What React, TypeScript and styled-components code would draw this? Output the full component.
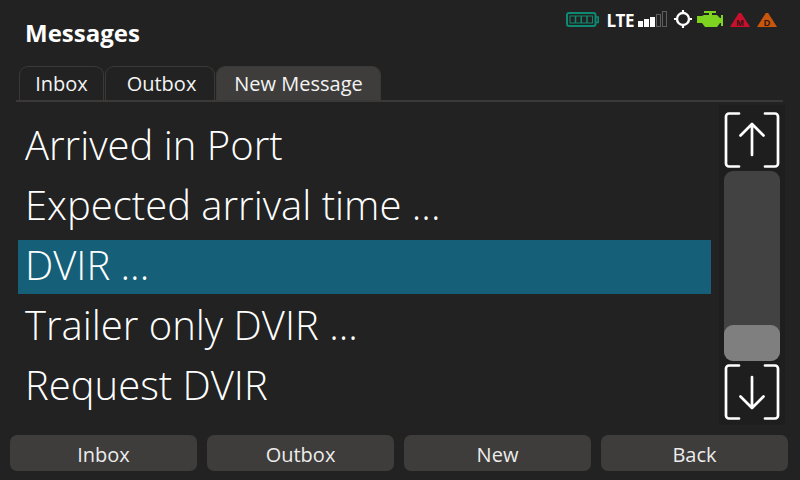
import React from 'react'
import styled, { createGlobalStyle } from 'styled-components'

const GlobalStyle = createGlobalStyle`
  html, body {
    margin: 0;
    padding: 0;
    background: #222222;
  }
  * {
    box-sizing: border-box;
  }
`

const Screen = styled.div`
  width: 800px;
  height: 480px;
  overflow: hidden;
  display: flex;
  flex-direction: column;
  background: #222222;
  color: #fff;
  font-family: 'Open Sans', 'Liberation Sans', sans-serif;
`

const Header = styled.header`
  height: 66px;
  flex: none;
  padding: 0 23px 0 25px;
  display: flex;
  justify-content: space-between;
  align-items: flex-start;
`

const Title = styled.h1`
  margin: 17px 0 0;
  font-size: 24px;
  line-height: 32px;
  font-weight: 700;
`

const StatusIcons = styled.div`
  margin-top: 10px;
  display: flex;
  align-items: flex-start;
`

const TabBar = styled.nav`
  height: 36px;
  flex: none;
  margin: 0 17px 0 16px;
  padding-left: 3px;
  display: flex;
  border-bottom: 2px solid #3a3937;
`

const Tab = styled.div<{ $active?: boolean; $width: number; $indent?: number }>`
  width: ${({ $width }) => $width}px;
  height: 34px;
  padding-left: ${({ $indent }) => $indent ?? 0}px;
  display: flex;
  align-items: center;
  justify-content: center;
  font-size: 20px;
  color: #f4f4f4;
  border-radius: 9px 9px 0 0;
  border: 1px solid #3a3937;
  border-bottom: none;
  background: ${({ $active }) => ($active ? '#3e3d3b' : 'transparent')};
  margin-right: ${({ $active }) => ($active ? 0 : 1)}px;
`

const Main = styled.main`
  flex: 1;
  display: flex;
  align-items: flex-start;
  padding-left: 18px;
`

const MessageList = styled.ul`
  width: 693px;
  margin: 0;
  padding: 12px 0 0;
  list-style: none;
`

const MessageRow = styled.li<{ $selected?: boolean }>`
  height: ${({ $selected }) => ($selected ? 54 : 60)}px;
  margin-top: ${({ $selected }) => ($selected ? 6 : 0)}px;
  padding: ${({ $selected }) => ($selected ? '0 0 6px 7px' : '0 0 0 7px')};
  display: flex;
  align-items: center;
  font-size: 40px;
  font-weight: 300;
  white-space: nowrap;
  background: ${({ $selected }) => ($selected ? '#156078' : 'transparent')};
`

const ScrollColumn = styled.div`
  margin: 3px 0 0 8px;
  width: 66px;
  padding: 7px 5px 5px;
  display: flex;
  flex-direction: column;
  gap: 3px;
  background: #1e1e1e;
`

const ScrollButton = styled.div`
  height: 56px;
  flex: none;
  display: flex;
`

const Track = styled.div`
  height: 190px;
  flex: none;
  display: flex;
  flex-direction: column;
  justify-content: flex-end;
  border-radius: 9px;
  background: #434242;
`

const Thumb = styled.div`
  height: 36px;
  border-radius: 9px;
  background: #807f7f;
`

const Footer = styled.footer`
  height: 36px;
  flex: none;
  margin: 0 12px 9px 10px;
  display: grid;
  grid-template-columns: repeat(4, 187px);
  column-gap: 10px;
`

const FooterButton = styled.div`
  padding-top: 2px;
  border-radius: 7px;
  background: #3e3d3b;
  display: flex;
  align-items: center;
  justify-content: center;
  font-size: 20px;
  color: #ececec;
`

const Icon = styled.svg<{ $gap: number }>`
  display: block;
  flex: none;
  margin-right: ${({ $gap }) => $gap}px;
`

const Battery = () => (
  <Icon $gap={8} width="33" height="18" viewBox="0 0 33 18" fill="none" stroke="#0f8a72">
    <rect x="1" y="3" width="28.500" height="13" rx="2" strokeWidth="2" />
    <path d="M30 7h2.200v5.500H30" strokeWidth="1.600" />
    <rect x="4" y="6" width="22.500" height="7" strokeWidth="1" />
    <path d="M9.500 6v7M15.250 6v7M21 6v7" strokeWidth="1.500" />
  </Icon>
)

const Lte = styled.span`
  margin: 1px 4px 0 0;
  font-size: 17px;
  font-weight: 700;
  line-height: 20px;
  letter-spacing: -0.5px;
`

const Signal = () => (
  <Icon $gap={7} width="29" height="18" viewBox="0 0 29 18">
    <rect x="0" y="11" width="5" height="6" fill="#fff" />
    <rect x="6" y="9" width="5" height="8" fill="#fff" />
    <rect x="12" y="7" width="5" height="10" fill="#fff" />
    <rect x="18.500" y="4.500" width="4" height="12" fill="none" stroke="#5e5e5e" />
    <rect x="24.500" y="1.500" width="4" height="15" fill="none" stroke="#5e5e5e" />
  </Icon>
)

const Crosshair = () => (
  <Icon $gap={5} width="18" height="18" viewBox="0 0 18 18" fill="none" stroke="#fff">
    <circle cx="9" cy="9" r="6" strokeWidth="2.400" />
    <path d="M9 0v4M9 14v4M0 9h4M14 9h4" strokeWidth="2.200" />
  </Icon>
)

const Engine = () => (
  <Icon $gap={7} width="26" height="18" viewBox="0 0 26 18">
    <path
      fill="#7ed321"
      d="M7 1h12v2h-4v2h5l3 3h1V5h2v11h-2v-3h-1l-3 4H8l-3-4H0V6h5l2-1h5V3H7z"
    />
  </Icon>
)

const WarningLamp = ({ color, letter, gap }: { color: string; letter: string; gap: number }) => (
  <Icon $gap={gap} width="20" height="18" viewBox="0 0 20 18">
    <path d="M8.800 3h2.400L20 17H0z" fill={color} />
    <text
      x="10"
      y="15.500"
      fontFamily="'Liberation Sans', sans-serif"
      fontSize="9"
      fontWeight="700"
      textAnchor="middle"
      fill="#2e1410"
    >
      {letter}
    </text>
  </Icon>
)

const Arrow = ({ down }: { down?: boolean }) => (
  <svg width="56" height="56" viewBox="0 0 56 56" fill="none" stroke="#fff" strokeWidth="2.700" strokeLinecap="round" strokeLinejoin="round">
    <path d="M15 1.500H5a3 3 0 0 0-3 3v47a3 3 0 0 0 3 3h10" />
    <path d="M41 1.500h10a3 3 0 0 1 3 3v47a3 3 0 0 1-3 3H41" />
    {down ? (
      <path d="M28 13v31M16.500 32.500L28 44l11.500-11.500" />
    ) : (
      <path d="M28 43V12M16.500 23.500L28 12l11.500 11.500" />
    )}
  </svg>
)

const messages = ['Arrived in Port', 'Expected arrival time ...', 'DVIR ...', 'Trailer only DVIR ...', 'Request DVIR']

export default function App() {
  return (
    <Screen>
      <GlobalStyle />
      <Header>
        <Title>Messages</Title>
        <StatusIcons>
          <Battery />
          <Lte>LTE</Lte>
          <Signal />
          <Crosshair />
          <Engine />
          <WarningLamp color="#c8102e" letter="M" gap={7} />
          <WarningLamp color="#c8560c" letter="D" gap={0} />
        </StatusIcons>
      </Header>
      <TabBar>
        <Tab $width={85}>Inbox</Tab>
        <Tab $width={110} $indent={3}>
          Outbox
        </Tab>
        <Tab $width={165} $active>
          New Message
        </Tab>
      </TabBar>
      <Main>
        <MessageList>
          {messages.map((m, i) => (
            <MessageRow key={m} $selected={i === 2}>
              {m}
            </MessageRow>
          ))}
        </MessageList>
        <ScrollColumn>
          <ScrollButton>
            <Arrow />
          </ScrollButton>
          <Track>
            <Thumb />
          </Track>
          <ScrollButton>
            <Arrow down />
          </ScrollButton>
        </ScrollColumn>
      </Main>
      <Footer>
        <FooterButton>Inbox</FooterButton>
        <FooterButton>Outbox</FooterButton>
        <FooterButton>New</FooterButton>
        <FooterButton>Back</FooterButton>
      </Footer>
    </Screen>
  )
}
